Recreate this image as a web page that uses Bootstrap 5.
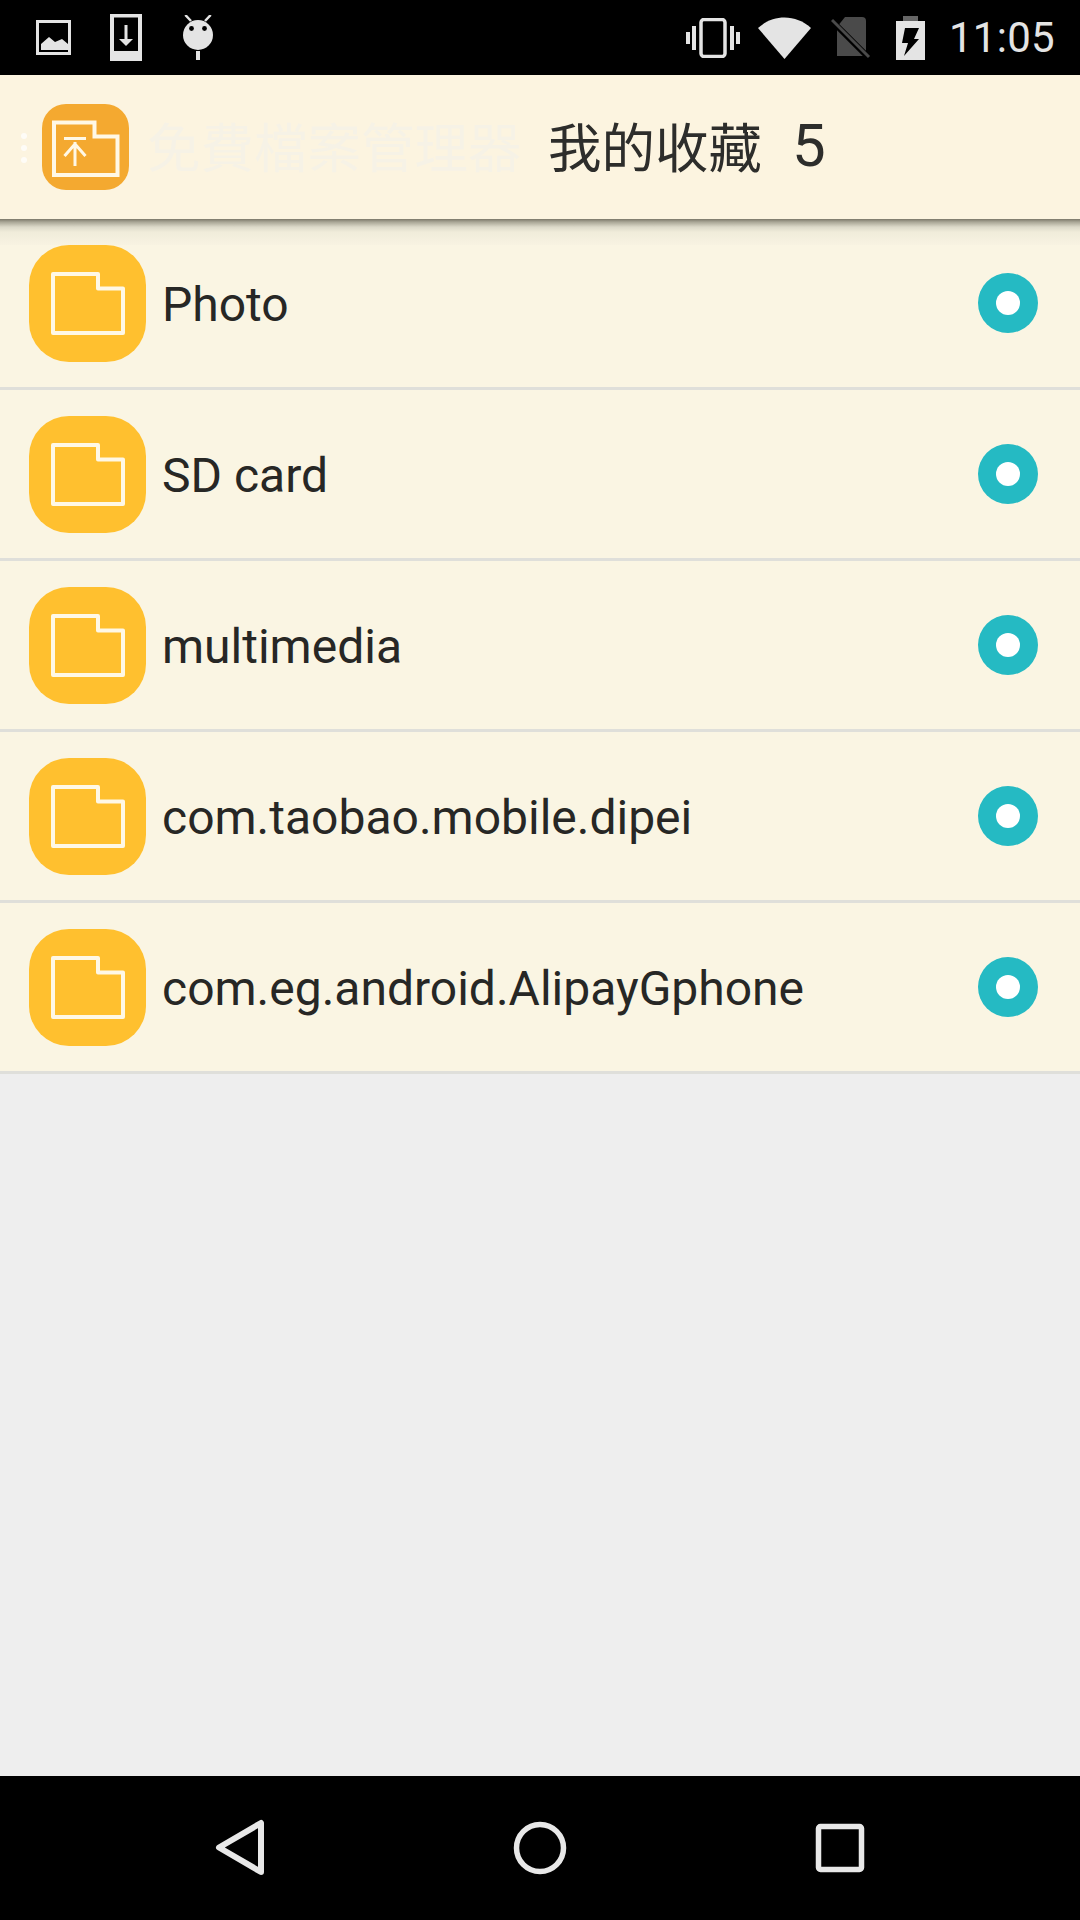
<!DOCTYPE html>
<html lang="zh-Hant">
<head>
  <meta charset="UTF-8">
  <meta name="viewport" content="width=device-width, initial-scale=1.0">
  <title>我的收藏</title>
  <link href="https://cdn.jsdelivr.net/npm/bootstrap@5.3.0/dist/css/bootstrap.min.css" rel="stylesheet">
  <style>
    body {
      font-family: Roboto, "Noto Sans CJK TC", sans-serif;
      background-color: #eeeeee;
      height: 1920px;
      overflow: hidden;
    }
    .status-bar {
      height: 75px;
      background-color: #000;
      color: #e4e4e4;
      padding: 0 25px 0 36px;
    }
    .status-left { gap: 39px; }
    .status-right { gap: 18px; }
    .clock { font-size: 42px; line-height: 75px; margin-left: 6px; letter-spacing: .3px; }
    .app-bar {
      height: 144px;
      background-color: #fcf4e0;
      position: relative;
      padding-left: 42px;
      font-family: "Noto Sans CJK TC", sans-serif;
      font-size: 53.5px;
      line-height: 1;
      color: #2d2d2b;
      z-index: 2;
    }
    /* shadow under the bar */
    .app-bar::after {
      content: "";
      position: absolute;
      left: 0;
      right: 0;
      top: 100%;
      height: 26px;
      background: linear-gradient(to bottom, #7b7769 0, #a9a696 3px, #dcd9c9 8px, #f0ecda 13px, #f8f3e2 26px);
    }
    .dots {
      position: absolute;
      left: 21px;
      top: 58px;
      width: 6px;
      height: 6px;
      border-radius: 50%;
      background: #fff;
      opacity: .75;
      box-shadow: 0 12px 0 #fff, 0 24px 0 #fff;
    }
    .bar-text { margin-bottom: 4px; }
    .ghost-title { color: #f6f2e6; margin-left: 18px; width: 401px; white-space: nowrap; }
    .fav-count { margin-left: 30px; margin-bottom: 2px; font-family: Roboto, sans-serif; font-size: 60px; }
    .fav-list .fav-row,
    .fav-list .fav-row:last-child {
      height: 171px;
      padding: 0 42px 0 29px;
      background-color: #faf5e3;
      border-width: 0 0 3px;
      border-style: solid;
      border-color: #dfdfda;
    }
    .folder-tile {
      width: 117px;
      height: 117px;
      border-radius: 40px;
      background-color: #ffc02f;
      flex-shrink: 0;
    }
    .fav-name { font-size: 48px; color: #272725; margin-left: 16px; padding-top: 3px; }
    .radio-dot {
      width: 60px;
      height: 60px;
      border-radius: 50%;
      background-color: #25bac3;
    }
    .radio-dot span {
      width: 24px;
      height: 24px;
      border-radius: 50%;
      background-color: #fff;
    }
    .nav-bar { height: 144px; background-color: #000; }
  </style>
</head>
<body class="d-flex flex-column">
  <div class="status-bar d-flex justify-content-between align-items-center">
    <div class="status-left d-flex align-items-center">
      <svg width="35" height="35" viewBox="0 0 35 35"><rect x="1.500" y="1.500" width="32" height="32" fill="none" stroke="#e4e4e4" stroke-width="3"/><path d="M5 30V24L13 17L19 22L26 19L32 24V30Z" fill="#e4e4e4"/></svg>
      <svg width="32" height="47" viewBox="0 0 32 47"><path d="M0 0H32V47H0ZM4 3.500V37H28V3.500Z" fill="#e4e4e4" fill-rule="evenodd"/><path d="M16 11V28" stroke="#e4e4e4" stroke-width="3"/><path d="M9 25H23L16 32Z" fill="#e4e4e4"/></svg>
      <svg width="30" height="45" viewBox="0 0 30 45" style="margin-left:2px"><path d="M8 6L2.300 0M22 6L27.700 0" stroke="#e4e4e4" stroke-width="2.500"/><circle cx="15" cy="20" r="15" fill="#e4e4e4"/><circle cx="8.500" cy="13.500" r="2.400" fill="#000"/><circle cx="21.500" cy="13.500" r="2.400" fill="#000"/><rect x="13" y="36" width="4" height="9" fill="#e4e4e4"/></svg>
    </div>
    <div class="status-right d-flex align-items-center">
      <svg width="54" height="40" viewBox="0 0 54 40"><rect x="15" y="1.500" width="24" height="37" rx="3" fill="none" stroke="#e4e4e4" stroke-width="3.500"/><path d="M0 14H4V26H0ZM6 8H10V32H6ZM44 8H48V32H44ZM50 14H54V26H50Z" fill="#e4e4e4"/></svg>
      <svg width="53" height="42" viewBox="0 0 53 42"><path d="M0 11C15-3 38-3 53 11L26.500 42Z" fill="#e4e4e4"/></svg>
      <svg width="40" height="42" viewBox="0 0 40 42" style="margin-left:2px"><path d="M14 0H31Q35 0 35 4V39H6V10Z" fill="#4a4a4a"/><path d="M0 3L38 41" stroke="#000" stroke-width="6"/><path d="M1 3L38 40" stroke="#4a4a4a" stroke-width="3"/></svg>
      <svg width="29" height="44" viewBox="0 0 29 44" style="margin-left:7px"><rect x="7" y="0" width="15" height="5" fill="#666"/><rect x="0" y="5" width="29" height="39" fill="#e4e4e4"/><path d="M9 12H23L18 23H23L8 40L12 27H6Z" fill="#000"/></svg>
      <span class="clock">11:05</span>
    </div>
  </div>

  <div class="app-bar d-flex align-items-center">
    <span class="dots"></span>
    <svg width="87" height="86" viewBox="0 0 87 86" class="flex-shrink-0">
      <rect width="87" height="86" rx="24" fill="#f4a930"/>
      <path d="M12 18.500H52.500V32.500H75.500V71H12Z" fill="none" stroke="#fff8e6" stroke-width="4"/>
      <path d="M22 34.500H44M33 62V38M22.500 52L33 40L43.500 52" fill="none" stroke="#fff8e6" stroke-width="3"/>
    </svg>
    <span class="ghost-title bar-text">免費檔案管理器</span>
    <span class="bar-text">我的收藏</span>
    <span class="fav-count">5</span>
  </div>

  <div class="list-group list-group-flush rounded-0 fav-list">
    <div class="list-group-item fav-row d-flex align-items-center">
      <div class="folder-tile d-flex align-items-center justify-content-center">
        <svg width="74" height="63" viewBox="0 0 74 63"><path d="M2 2H47V16.500H72V61H2Z" fill="none" stroke="#fff8e6" stroke-width="4" stroke-linejoin="round"/></svg>
      </div>
      <span class="fav-name flex-grow-1">Photo</span>
      <div class="radio-dot d-flex align-items-center justify-content-center"><span></span></div>
    </div>
    <div class="list-group-item fav-row d-flex align-items-center">
      <div class="folder-tile d-flex align-items-center justify-content-center">
        <svg width="74" height="63" viewBox="0 0 74 63"><path d="M2 2H47V16.500H72V61H2Z" fill="none" stroke="#fff8e6" stroke-width="4" stroke-linejoin="round"/></svg>
      </div>
      <span class="fav-name flex-grow-1">SD card</span>
      <div class="radio-dot d-flex align-items-center justify-content-center"><span></span></div>
    </div>
    <div class="list-group-item fav-row d-flex align-items-center">
      <div class="folder-tile d-flex align-items-center justify-content-center">
        <svg width="74" height="63" viewBox="0 0 74 63"><path d="M2 2H47V16.500H72V61H2Z" fill="none" stroke="#fff8e6" stroke-width="4" stroke-linejoin="round"/></svg>
      </div>
      <span class="fav-name flex-grow-1">multimedia</span>
      <div class="radio-dot d-flex align-items-center justify-content-center"><span></span></div>
    </div>
    <div class="list-group-item fav-row d-flex align-items-center">
      <div class="folder-tile d-flex align-items-center justify-content-center">
        <svg width="74" height="63" viewBox="0 0 74 63"><path d="M2 2H47V16.500H72V61H2Z" fill="none" stroke="#fff8e6" stroke-width="4" stroke-linejoin="round"/></svg>
      </div>
      <span class="fav-name flex-grow-1">com.taobao.mobile.dipei</span>
      <div class="radio-dot d-flex align-items-center justify-content-center"><span></span></div>
    </div>
    <div class="list-group-item fav-row d-flex align-items-center">
      <div class="folder-tile d-flex align-items-center justify-content-center">
        <svg width="74" height="63" viewBox="0 0 74 63"><path d="M2 2H47V16.500H72V61H2Z" fill="none" stroke="#fff8e6" stroke-width="4" stroke-linejoin="round"/></svg>
      </div>
      <span class="fav-name flex-grow-1">com.eg.android.AlipayGphone</span>
      <div class="radio-dot d-flex align-items-center justify-content-center"><span></span></div>
    </div>
  </div>

  <div class="flex-grow-1"></div>

  <div class="nav-bar">
    <svg width="1080" height="144" viewBox="0 0 1080 144" class="d-block">
      <path d="M261 47V96L219 71.500Z" fill="none" stroke="#e8e8e8" stroke-width="6" stroke-linejoin="round"/>
      <circle cx="540" cy="72" r="23.500" fill="none" stroke="#e8e8e8" stroke-width="5.500"/>
      <rect x="818.500" y="50.500" width="43" height="43" rx="2" fill="none" stroke="#e8e8e8" stroke-width="5.500"/>
    </svg>
  </div>
</body>
</html>
